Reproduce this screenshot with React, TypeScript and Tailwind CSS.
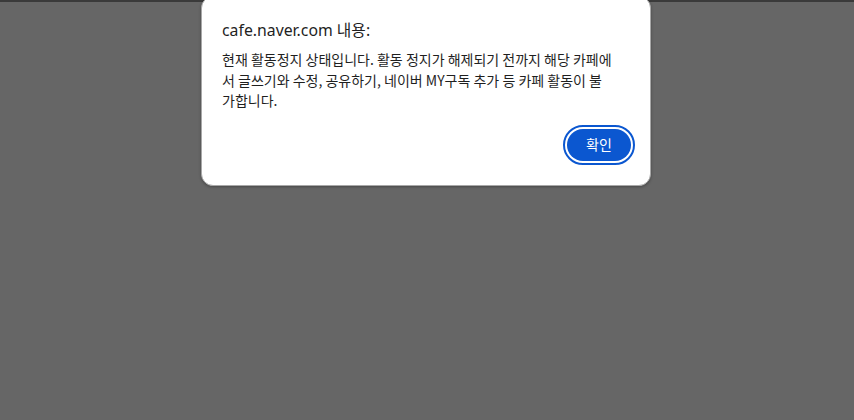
export default function App() {
  return (
    <main className="relative h-[420px] w-full overflow-hidden bg-[#666666] font-['Noto_Sans','Noto_Sans_CJK_KR',sans-serif]">
      <div className="h-[2px] w-full bg-[#3a3a3a]" />
      <div className="flex justify-center">
        <div className="relative -mt-[6px] ml-[-2px] w-[450px] rounded-[12px] border border-[#a8a8a8] bg-white pb-[20px] pl-[20px] pr-[15px] pt-[23px] shadow-[0_1px_3px_rgba(0,0,0,0.3)]">
          <h1 className="text-[15.8px] leading-[20px] text-[#1f1f1f]">cafe.naver.com 내용:</h1>
          <p className="mt-[9px] text-[14px] leading-[20.5px] text-[#1f1f1f] font-['Noto_Sans_CJK_KR',sans-serif]">
            현재 활동정지 상태입니다. 활동 정지가 해제되기 전까지 해당 카페에
            <br />서 글쓰기와 수정, 공유하기, 네이버 MY구독 추가 등 카페 활동이 불
            <br />가합니다.
          </p>
          <div className="mt-[14px] flex justify-end">
            <button className="rounded-full border-2 border-[#0b57d0] p-[2px]">
              <span className="flex h-[32px] w-[64px] items-center justify-center rounded-full bg-[#0b57d0] text-[14px] text-white font-['Noto_Sans_CJK_KR',sans-serif]">
                확인
              </span>
            </button>
          </div>
        </div>
      </div>
    </main>
  )
}
